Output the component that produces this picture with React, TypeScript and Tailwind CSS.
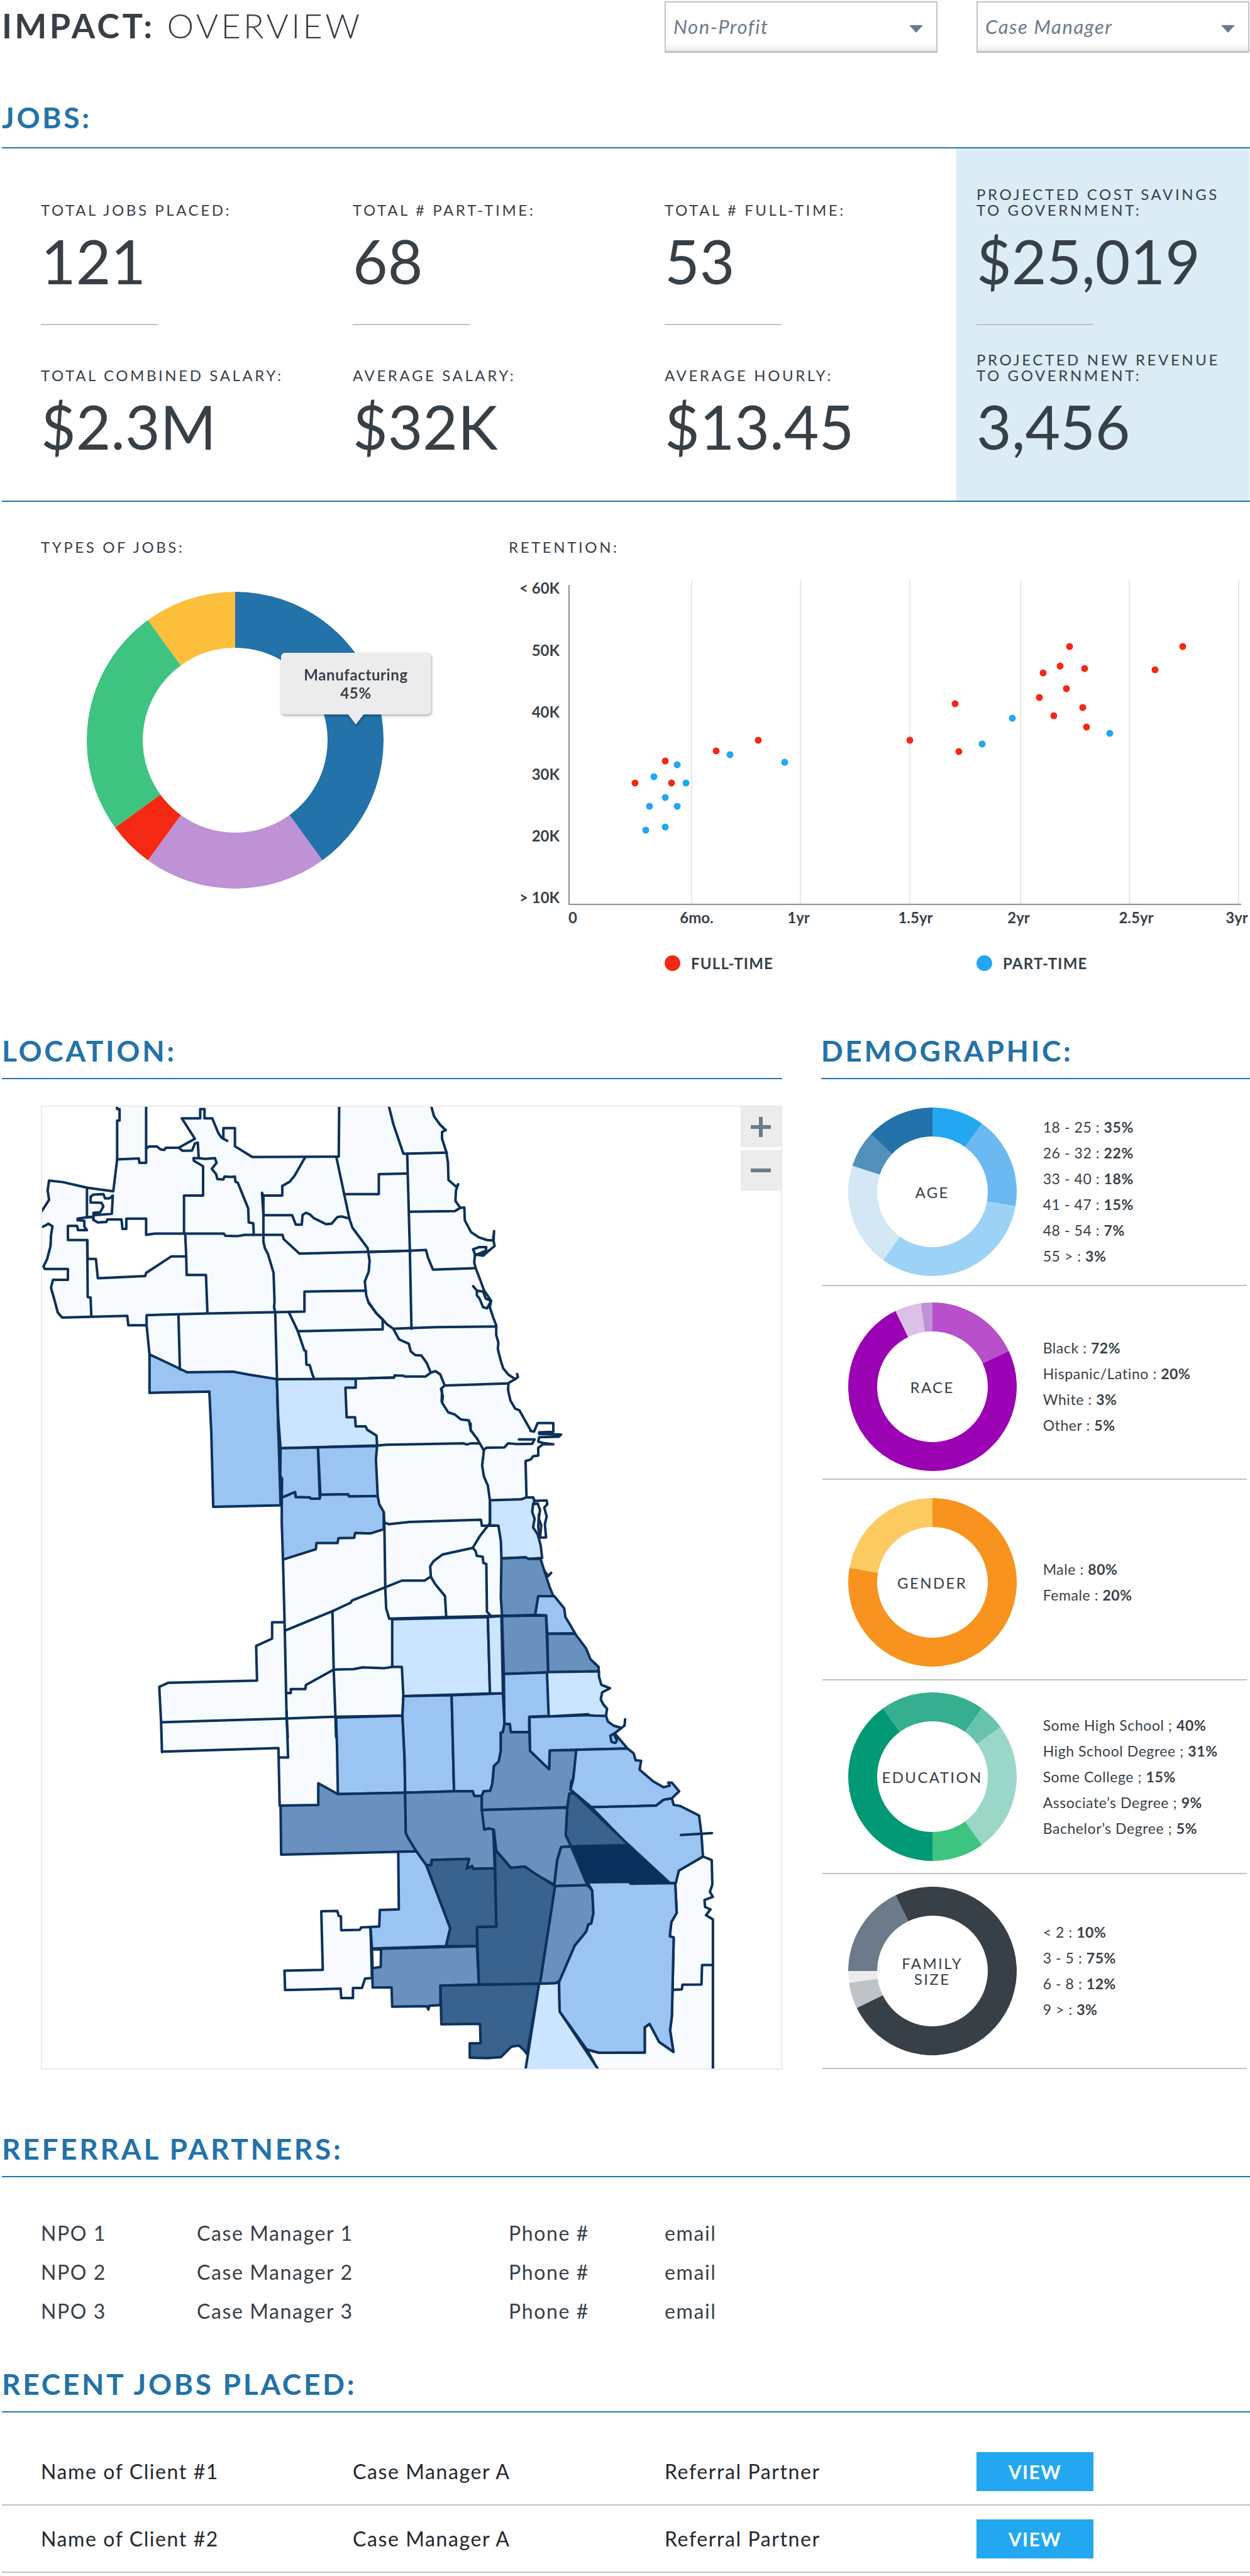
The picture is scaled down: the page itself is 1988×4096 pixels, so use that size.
import React from "react";

type Slice = { from: number; to: number; color: string };

const point = (r: number, deg: number) => {
  const a = ((deg - 90) * Math.PI) / 180;
  return `${(r * Math.cos(a)).toFixed(2)} ${(r * Math.sin(a)).toFixed(2)}`;
};

function slicePath(outer: number, inner: number, from: number, to: number) {
  const large = to - from > 180 ? 1 : 0;
  return `M${point(outer, from)}A${outer} ${outer} 0 ${large} 1 ${point(outer, to)}L${point(inner, to)}A${inner} ${inner} 0 ${large} 0 ${point(inner, from)}Z`;
}

function Donut({ slices, outer, inner, label }: { slices: Slice[]; outer: number; inner: number; label: string }) {
  return (
    <svg
      role="img"
      aria-label={label}
      viewBox={`${-outer} ${-outer} ${outer * 2} ${outer * 2}`}
      className="block h-full w-full"
    >
      {slices.map((s) => (
        <path key={s.from} d={slicePath(outer, inner, s.from, s.to)} fill={s.color} />
      ))}
    </svg>
  );
}

function Heading({ children, className = "pb-[15px]" }: { children: React.ReactNode; className?: string }) {
  return (
    <h2
      className={`border-b-2 border-[#2372a9] text-[46px] leading-[56px] font-bold tracking-[0.08em] text-[#2372a9] ${className}`}
    >
      {children}
    </h2>
  );
}

function Filter({ id, label }: { id: string; label: string }) {
  return (
    <div className="relative">
      <select
        id={id}
        aria-label={label}
        className="h-[82px] w-full appearance-none rounded-none border-2 border-b-3 border-[#bdc3c7] bg-linear-to-t from-[#ebebeb] to-white to-[12px] px-3 text-[31px] tracking-wider text-[#6c7a89] italic"
      >
        <option>{label}</option>
      </select>
      <svg viewBox="0 0 22 12" className="pointer-events-none absolute top-[38px] right-[23px] h-3 w-[22px]">
        <path d="M0 0H22L11 12Z" fill="#6c7a89" />
      </svg>
    </div>
  );
}

function Stat({ label, value }: { label: string[]; value: string }) {
  return (
    <div>
      <div className="flex h-[50px] flex-col justify-end text-[24px] leading-[25px] tracking-[0.15em] whitespace-nowrap">
        {label.map((l) => (
          <div key={l}>{l}</div>
        ))}
      </div>
      <div className="mt-[21px] text-[96px] leading-none">{value}</div>
    </div>
  );
}

const stats = [
  [
    { label: ["TOTAL JOBS PLACED:"], value: "121" },
    { label: ["TOTAL COMBINED SALARY:"], value: "$2.3M" },
  ],
  [
    { label: ["TOTAL # PART-TIME:"], value: "68" },
    { label: ["AVERAGE SALARY:"], value: "$32K" },
  ],
  [
    { label: ["TOTAL # FULL-TIME:"], value: "53" },
    { label: ["AVERAGE HOURLY:"], value: "$13.45" },
  ],
  [
    { label: ["PROJECTED COST SAVINGS", "TO GOVERNMENT:"], value: "$25,019" },
    { label: ["PROJECTED NEW REVENUE", "TO GOVERNMENT:"], value: "3,456" },
  ],
];

const jobTypes: Slice[] = [
  { from: 0, to: 144, color: "#2372a9" },
  { from: 144, to: 216, color: "#bf91d5" },
  { from: 216, to: 234, color: "#f42813" },
  { from: 234, to: 324, color: "#3fc380" },
  { from: 324, to: 360, color: "#fbbf3b" },
];

// Scatter samples, in plot units measured from the top left corner of the chart.
const fullTime = [
  [1193, 308], [1428, 308], [1174, 362], [1139, 381], [1225, 370], [1371, 373], [1187, 425],
  [1131, 450], [955, 468], [1220, 479], [1161, 501], [1228, 534], [861, 571], [964, 603],
  [547, 571], [459, 600], [354, 629], [291, 691], [367, 691],
];
const partTime = [
  [1074, 508], [1277, 552], [1012, 581], [488, 611], [602, 633], [378, 640], [330, 673],
  [397, 691], [354, 732], [321, 757], [378, 757], [354, 815], [313, 823],
];
const plotX = (u: number) => Math.round(u * 0.766 - 22);
const plotY = (v: number) => Math.round(v * 0.566 - 58);

const yTicks: [string, number][] = [
  ["< 60K", 32], ["50K", 131], ["40K", 229], ["30K", 328], ["20K", 426], ["> 10K", 524],
];
const xTicks: [string, number][] = [
  ["0", 102], ["6mo.", 299], ["1yr", 461], ["1.5yr", 647], ["2yr", 811], ["2.5yr", 998], ["3yr", 1158],
];

function Retention() {
  return (
    <svg role="img" aria-label="Retention" viewBox="0 0 1178 568" className="mt-[30px] block w-full">
      {[291, 464, 638, 814, 987, 1161].map((x) => (
        <path key={x} d={`M${x} 11V526`} stroke="#e6e7e8" strokeWidth="2" />
      ))}
      <path d="M96 18V526H1165" fill="none" stroke="#8b8f91" strokeWidth="2" />
      <g fill="#373f47" fontSize="24" fontWeight="700">
        {yTicks.map(([t, y]) => (
          <text key={t} x="81" y={y} textAnchor="end">
            {t}
          </text>
        ))}
        {xTicks.map(([t, x]) => (
          <text key={t} x={x} y="556" textAnchor="middle">
            {t}
          </text>
        ))}
      </g>
      {fullTime.map(([x, y]) => (
        <circle key={`${x}-${y}`} cx={plotX(x)} cy={plotY(y)} r="5.5" fill="#f42813" />
      ))}
      {partTime.map(([x, y]) => (
        <circle key={`${x}-${y}`} cx={plotX(x)} cy={plotY(y)} r="5.5" fill="#22a7f0" />
      ))}
    </svg>
  );
}

const L = "#f7fbff";
const C1 = "#cbe4ff";
const C2 = "#9ac4f1";
const C3 = "#6991c0";
const C4 = "#39638f";
const C5 = "#08305c";

type Tile = { transform: string; land?: string[]; areas?: [string, string][]; lines?: string[] };

// The ward map, drawn as five sheets that each keep their own units.
const tiles: Tile[] = [
  {
    transform: "translate(60 2080) scale(.45918 .40816)",
    land: [
      "348,40 350,62 360,62 360,115 350,115 350,296 334,445 225,428 125,402 68,395 62,440 68,485 38,535 38,612 65,596 82,608 76,650 74,700 60,760 45,795 50,807 146,807 146,857 84,857 76,895 90,950 104,1010 122,1033 392,1025 396,1069 472,1069 484,1384 732,1378 740,1568 1568,1568 1568,40 1270,40 1268,283 910,285 838,235 838,150 790,150 790,200 806,210 782,195 770,175 744,105 712,105 712,62 694,62 694,105 618,105 672,200 605,242 552,242 545,252 530,250 515,236 482,236 470,245 470,40",
    ],
    areas: [
      ["#ffffff", "146,606 184,606 188,626 225,626 214,610 214,582 186,580 186,572 225,566 248,564 252,578 270,590 305,588 310,576 368,576 372,620 388,620 388,572 470,572 470,648 505,642 632,642 636,748 575,748 470,825 466,840 270,850 262,760 228,760 226,672 146,672"],
      ["#ffffff", "240,470 252,460 293,458 300,478 318,478 332,465 328,550 252,556 252,545 280,542 293,515 285,498 240,497"],
      [C2, "484,1205 560,1245 640,1288 830,1285 900,1300 1012,1320 1018,1568 1027,1908 748,1915 740,1568 732,1378 484,1384"],
    ],
    lines: [
      "348,40 350,62 360,62 360,115 350,115 350,296 334,445 225,428 125,402 68,395 62,440 68,485 38,537",
      "36,612 50,606 65,596 82,608 76,650 74,700 60,760 45,795 50,807 146,807 146,857 84,857 76,895 90,950 104,1010 122,1033 392,1025 396,1069 472,1069",
      "350,296 440,292 442,312 470,312 470,40",
      "470,245 482,236 515,236 530,250 545,252 552,242 605,242 672,200 618,105 694,105 694,62 712,62 712,105 744,105 770,175 782,195 806,210 790,200 790,150 838,150 838,235 910,285 1268,283 1270,40",
      "225,428 225,566 248,564",
      "252,556 252,578",
      "605,242 620,256 660,255 672,222 684,218 688,290 666,290 668,303 706,328 706,465 627,465 627,642",
      "688,290 715,294 755,290 762,312 742,340 760,365 765,388 790,390 795,376 825,378 838,376 840,400 850,405 893,525 895,590 914,594 916,648",
      "632,642 792,642 798,652 845,654 880,648 1035,648 1040,668 1105,735 1568,722",
      "1128,288 1085,372 1065,400 1034,420 1034,465 956,465 950,452 956,556 1075,556 1090,600 1115,600 1118,555 1132,545 1148,552 1165,570 1215,598 1238,596 1262,565 1280,562 1312,572",
      "956,465 956,680 962,710 975,738 998,825 1002,960 1000,985 1005,1010 1018,1568",
      "1258,285 1290,455 1312,572 1325,615 1388,710 1396,770 1392,820 1376,865 1382,930 1392,965 1425,1015 1450,1042",
      "1290,458 1434,458 1434,365 1552,362",
      "226,672 228,938 240,940 243,1028",
      "636,748 638,835 718,835 724,1012",
      "484,1205 472,1069 472,1022 724,1014 1000,1008 1126,1005 1126,912 1380,908",
      "604,1022 610,1275",
      "1012,1320 1030,1322 1330,1318 1498,1312",
      "1062,1010 1098,1095 1125,1185 1132,1190 1134,1252 1148,1255 1158,1295 1165,1315",
      "1098,1097 1450,1088 1450,1042",
    ],
  },
  {
    transform: "translate(700 2080) scale(.5102 .40816)",
    land: [
      "-40,40 232,40 242,95 265,135 286,160 272,168 272,200 288,262 294,310 296,392 326,425 324,440 322,490 340,522 355,520 357,580 380,635 410,660 462,674 468,700 450,718 425,745 395,735 392,775 398,805 415,860 428,905 455,955 450,985 470,1050 474,1075 474,1115 482,1150 480,1180 490,1230 500,1270 520,1300 545,1320 520,1338 518,1370 527,1420 545,1458 560,1465 604,1562 604,1600 -40,1600",
    ],
    lines: [
      "230,40 242,95 265,135 286,160 272,168 272,200 288,262 294,310 296,392 326,425 332,412 324,440 322,490 340,522 355,520 357,580 380,635 410,660 440,672 462,674 466,630 464,674 468,700 450,718 425,745 395,738 392,775 398,805 415,860 428,905 455,955 450,985 462,1030 474,1070 474,1115 482,1150 480,1180 490,1230 500,1270 520,1300 545,1320 555,1310 552,1296",
      "545,1320 520,1338 518,1370 527,1420 545,1458 560,1465 604,1562",
      "395,738 388,715 410,705 437,705 435,722 410,735 398,742 425,738 450,718",
      "388,887 402,908 425,912 435,945 455,955 440,990 425,985 412,945 402,930 402,908",
      "72,40 90,130 128,270 290,265",
      "142,270 148,540 152,722 158,1085",
      "148,540 320,537 340,522",
      "0,728 152,722 212,718 220,755 238,810 395,803",
      "90,1085 250,1078 474,1075",
      "0,965 25,1010 50,1042 68,1066 90,1085 112,1135 148,1155 155,1190 172,1208 195,1210 215,1245 230,1290 248,1283 265,1298 282,1350 268,1365 275,1400 272,1430 295,1475 320,1485 342,1508 372,1512 380,1562",
      "0,1315 92,1313 95,1303 128,1304 132,1308 210,1308 230,1290",
      "282,1350 515,1340",
    ],
  },
  {
    transform: "translate(240 2640) scale(.57398 .42092)",
    land: [
      "500,240 828,240 828,180 1338,187 1348,187 1350,222 1342,242 1362,260 1362,295 1345,298 1338,312 1320,320 1323,480 1345,484 1375,758 1300,1568 115,1568 106,1340 135,1322 430,1312 427,1155 480,1122 480,1048 520,1048",
    ],
    areas: [
      [C1, "496,-50 757,-52 757,-12 723,-12 727,122 755,122 757,163 790,163 795,178 826,205 828,250 508,262 500,120"],
      [C2, "508,262 632,258 638,490 608,490 605,484 558,483 556,460 512,485 513,400 507,385"],
      [C2, "632,258 828,252 824,310 830,478 735,480 732,470 640,472"],
      [C2, "512,485 556,460 558,483 605,484 608,490 638,490 640,472 732,470 735,480 830,478 835,515 850,550 850,628 805,647 755,645 752,667 700,668 697,690 627,690 625,718 516,765 512,600"],
      [C1, "1202,497 1305,493 1323,484 1345,484 1350,500 1345,515 1342,550 1350,580 1345,620 1360,650 1370,700 1375,758 1330,762 1320,755 1240,760 1238,680 1230,612 1202,610"],
      [C1, "878,1035 1195,1025 1198,1170 1202,1370 915,1382 910,1250 878,1250"],
      [C1, "1195,1025 1240,1020 1245,1370 1202,1370 1198,1170"],
      [C3, "1240,760 1320,755 1330,762 1370,762 1382,815 1400,890 1412,930 1362,930 1352,1015 1242,1020 1238,935"],
      [C2, "1362,930 1415,930 1448,985 1452,1025 1470,1065 1484,1098 1392,1100 1388,1018 1352,1015"],
      [C3, "1242,1020 1388,1018 1395,1275 1248,1282"],
      [C3, "1392,1100 1484,1100 1520,1165 1535,1215 1562,1250 1562,1270 1395,1275"],
      [C2, "1248,1282 1395,1275 1398,1472 1332,1475 1332,1545 1270,1545 1268,1508 1250,1508"],
    ],
    lines: [
      "1336,183 1348,187 1360,148 1412,148 1412,188 1365,190 1365,197 1438,200 1430,210 1365,212 1362,232 1378,238 1412,244 1378,244 1362,260 1362,295 1345,298 1338,312 1320,320 1323,480",
      "1298,222 1350,222 1342,242 1290,243 1262,240 1250,258 1190,260 1180,270",
      "1345,484 1350,500 1390,498 1392,515 1382,530 1390,570 1384,605 1388,665 1368,665 1372,610 1364,580 1368,540 1360,512 1345,515",
      "1364,560 1362,620 1368,665",
      "1382,815 1395,840 1405,825",
      "1138,150 1138,180 1160,220 1168,240 1182,272 1176,340 1182,390 1195,430 1202,500 1202,600 1168,660 1145,712",
      "1043,0 1042,50",
      "828,250 858,246 1115,240 1125,245 1138,240 1168,240",
      "516,765 522,1085 528,1480 532,1568",
      "850,550 852,600 855,890 858,985 868,1032",
      "850,598 868,605 935,595 1172,585 1175,612 1230,612",
      "525,1085 680,998 740,960 745,950 855,890 910,860 985,860 1006,842 1004,795 1015,772 1045,742 1145,712 1155,728 1158,748 1178,752 1180,780 1190,785 1192,1000 1205,1020",
      "1006,842 1020,875 1053,930 1057,1025",
      "868,1032 1057,1025 1205,1020 1388,1018",
      "680,998 684,1260 690,1480 692,1568",
      "520,1048 480,1048 480,1122 427,1155 430,1312 135,1322 106,1340 112,1500 115,1635",
      "528,1368 542,1368 542,1350 590,1350 592,1332 684,1262 750,1260 780,1252 850,1256 878,1250",
      "112,1500 528,1483 690,1475 915,1470",
      "915,1382 912,1470",
    ],
  },
  {
    transform: "translate(500 3250) scale(.57398 .44643)",
    land: [
      "-336,-60 -338,173 0,160 48,158 52,403 180,403 245,354 462,348 462,-20 -100,-60",
    ],
    areas: [
      [L, "190,853 243,852 248,873 255,875 256,934 318,932 322,922 353,920 358,1138 335,1140 325,1180 295,1180 295,1223 256,1223 254,1183 70,1189 68,1106 195,1103"],
      [L, "1455,620 1484,635 1486,740 1478,770 1488,792 1460,805 1462,835 1480,845 1465,870 1488,888 1488,1540 1112,1540 1070,1442 1110,1456 1262,1455 1262,1348 1278,1333 1310,1410 1357,1452 1346,1360 1352,1300 1354,1188 1358,965 1345,960 1350,900 1368,860 1363,733 1375,680"],
      [C2, "239,28 459,20 466,200 468,348 245,354 242,150"],
      [C2, "462,-63 622,-67 630,342 468,348 466,200 459,20"],
      [C2, "622,-67 792,-75 797,55 792,90 785,92 785,170 778,215 762,235 757,310 750,340 728,342 722,362 697,362 692,342 630,342"],
      [C3, "55,403 180,400 180,308 245,354 468,348 470,520 480,545 505,598 445,600 57,612"],
      [C3, "468,348 630,342 692,342 697,362 722,362 722,420 728,425 730,505 745,500 760,503 765,670 692,672 690,660 672,672 680,630 556,635 555,657 538,657 505,598 480,545 470,520"],
      [C3, "797,55 815,57 818,90 880,90 882,170 945,248 947,168 1035,165 1035,240 1028,255 1025,290 1018,300 1016,335 1028,350 1012,352 1010,410 722,422 722,362 728,342 750,340 757,310 762,235 778,215 785,170 785,92 792,90"],
      [C2, "880,26 1075,18 1133,18 1140,45 1158,62 1185,72 1162,95 1205,160 947,168 945,248 882,170"],
      [C2, "1035,165 1205,160 1225,180 1232,210 1250,212 1245,250 1290,300 1325,325 1345,318 1340,305 1352,305 1376,342 1352,372 1325,378 1300,403 1085,410 1016,335 1025,290 1028,255"],
      [C2, "1085,410 1300,403 1325,378 1352,372 1358,400 1380,405 1442,445 1450,525 1455,620 1375,680 1365,733 1345,733 1210,575"],
      [C4, "1012,352 1028,350 1210,572 1018,577 1000,530 1005,412"],
      [C5, "1018,577 1210,572 1345,733 1215,736 1212,726 1072,730"],
      [C3, "722,422 1005,412 1000,530 1018,577 985,580 972,635 962,740 920,710 895,690 865,663 818,668 770,595 762,505 745,500 730,505"],
      [C3, "985,580 1018,577 1072,742 962,746 972,635"],
      [C4, "765,590 818,668 865,663 895,690 920,710 965,746 915,1162 712,1165 706,920 770,918"],
      [C3, "965,746 1072,742 1088,765 1092,860 1085,905 1075,910 1068,940 1030,1000 980,1150 965,1160 915,1162"],
      [C4, "556,635 680,630 672,672 690,660 692,672 765,670 770,918 706,920 706,1002 603,1002 617,925 538,657 555,657"],
      [C2, "445,600 505,598 538,657 617,925 603,1002 358,1012 353,920 382,918 384,848 447,845"],
      [C3, "358,1014 706,1002 712,1165 585,1170 585,1253 548,1256 545,1272 540,1258 425,1260 423,1178 360,1178"],
      ["#ffffff", "358,1016 388,1016 387,1090 360,1096"],
      [C4, "585,1170 912,1162 872,1462 862,1445 845,1425 820,1430 785,1475 740,1479 682,1477 682,1416 718,1416 716,1333 588,1335"],
      [C1, "912,1162 965,1160 978,1155 980,1280 1112,1535 866,1535"],
      [C2, "1072,730 1212,728 1215,736 1363,733 1368,860 1350,900 1345,960 1358,965 1354,1188 1352,1300 1346,1360 1357,1452 1310,1410 1278,1333 1262,1348 1262,1455 1110,1456 1070,1442 980,1280 978,1155 1030,1000 1068,940 1075,910 1085,905 1092,860 1088,765"],
    ],
    lines: [
      "-338,173 0,160 48,158 52,403",
      "75,0 80,198 50,198",
      "1382,528 1485,520",
      "1185,72 1195,62 1197,35",
      "1162,95 1148,105 1152,132 1165,136 1170,125 1160,100",
      "1355,1188 1385,1186 1387,1166 1450,1165 1452,1082 1488,1082",
    ],
  },
  {
    transform: "translate(900 2900) scale(.33333 .66964)",
    areas: [
      [C1, "415,412 712,410 712,425 725,448 750,453 775,458 730,470 722,490 738,505 758,516 752,537 690,536 660,535 650,532 425,538"],
    ],
  },
];

function WardMap() {
  return (
    <svg role="img" aria-label="Clients by ward" viewBox="78 2101 1405 1829" className="block w-full">
      {tiles.map((t) => (
        <g key={t.transform} transform={t.transform}>
          {t.land?.map((p) => <polygon key={p} points={p} fill={L} />)}
        </g>
      ))}
      {tiles.map((t) => (
        <g
          key={t.transform}
          transform={t.transform}
          stroke="#0d315b"
          strokeWidth="4"
          strokeLinejoin="round"
          strokeLinecap="round"
        >
          {t.areas?.map(([fill, p]) => (
            <polygon key={p} points={p} fill={fill} vectorEffect="non-scaling-stroke" />
          ))}
          {t.lines?.map((p) => (
            <polyline key={p} points={p} fill="none" vectorEffect="non-scaling-stroke" />
          ))}
        </g>
      ))}
    </svg>
  );
}

type Group = { title: string[]; sep: string; pad: string; slices: Slice[]; rows: [string, string][] };

const demographics: Group[] = [
  {
    title: ["AGE"],
    sep: ":",
    pad: "pt-[45px] pb-[14px]",
    slices: [
      { from: 0, to: 36, color: "#22a7f0" },
      { from: 36, to: 100, color: "#6bb9f0" },
      { from: 100, to: 216, color: "#9dd2f7" },
      { from: 216, to: 288, color: "#d3e7f5" },
      { from: 288, to: 313, color: "#5390bb" },
      { from: 313, to: 360, color: "#2372a9" },
    ],
    rows: [["18 - 25", "35%"], ["26 - 32", "22%"], ["33 - 40", "18%"], ["41 - 47", "15%"], ["48 - 54", "7%"], ["55 >", "3%"]],
  },
  {
    title: ["RACE"],
    sep: ":",
    pad: "pt-[26px] pb-3",
    slices: [
      { from: 0, to: 65, color: "#b750ca" },
      { from: 65, to: 334, color: "#9a02b3" },
      { from: 334, to: 352, color: "#dcc0e7" },
      { from: 352, to: 360, color: "#bf91d5" },
    ],
    rows: [["Black", "72%"], ["Hispanic/Latino", "20%"], ["White", "3%"], ["Other", "5%"]],
  },
  {
    title: ["GENDER"],
    sep: ":",
    pad: "pt-[29px] pb-5",
    slices: [
      { from: 0, to: 280, color: "#f7931e" },
      { from: 280, to: 360, color: "#fbcb61" },
    ],
    rows: [["Male", "80%"], ["Female", "20%"]],
  },
  {
    title: ["EDUCATION"],
    sep: ";",
    pad: "py-[19px]",
    slices: [
      { from: 180, to: 324, color: "#019875" },
      { from: 324, to: 396, color: "#36ae90" },
      { from: 36, to: 54, color: "#68c3ae" },
      { from: 54, to: 144, color: "#9bd7c8" },
      { from: 144, to: 180, color: "#3fc380" },
    ],
    rows: [["Some High School", "40%"], ["High School Degree", "31%"], ["Some College", "15%"], ["Associate’s Degree", "9%"], ["Bachelor’s Degree", "5%"]],
  },
  {
    title: ["FAMILY", "SIZE"],
    sep: ":",
    pad: "py-5",
    slices: [
      { from: 334, to: 604, color: "#373f47" },
      { from: 244, to: 262, color: "#bdc3c7" },
      { from: 262, to: 270, color: "#ececec" },
      { from: 270, to: 334, color: "#6c7a89" },
    ],
    rows: [["< 2", "10%"], ["3 - 5", "75%"], ["6 - 8", "12%"], ["9 >", "3%"]],
  },
];

export default function App() {
  return (
    <main className="w-full bg-white [font-family:Lato,'Open_Sans',sans-serif] text-[#373f47]">
      <header className="grid grid-cols-4 gap-x-[62px] pt-0.5 pr-px pl-[65px]">
        <h1 className="col-span-2 -ml-[62px] pt-[5px] text-[54px] leading-[68px] font-light tracking-[0.08em]">
          <strong className="font-bold">IMPACT:</strong> OVERVIEW
        </h1>
        <Filter id="non-profit" label="Non-Profit" />
        <Filter id="case-manager" label="Case Manager" />
      </header>

      <section className="mt-[75px] pl-[3px]">
        <Heading className="pb-[19px]">JOBS:</Heading>
        <div className="grid grid-cols-4 gap-x-[62px] border-b-2 border-[#2372a9] pr-px pl-[62px]">
          {stats.map((pair, i) => (
            <div
              key={pair[0].value}
              className={i === 3 ? "-ml-8 bg-[#dbecf6] pt-[60px] pb-[70px] pl-8" : "pt-[60px] pb-[70px]"}
            >
              <Stat {...pair[0]} />
              <hr className="mt-[52px] mb-[42px] w-[186px] border-t-2 border-[#bdc3c7]" />
              <Stat {...pair[1]} />
            </div>
          ))}
        </div>
      </section>

      <section className="grid grid-cols-8 gap-x-[62px] pt-[59px] pr-px pl-[65px]">
        <div className="col-span-3">
          <h3 className="text-[24px] leading-[25px] tracking-[0.15em]">TYPES OF JOBS:</h3>
          <div className="relative mt-[59px] ml-[73px] h-[472px] w-[472px]">
            <Donut slices={jobTypes} outer={236} inner={147} label="Types of jobs" />
            <div
              role="tooltip"
              className="absolute top-[97px] left-[309px] flex h-[98px] w-[238px] flex-col items-center justify-center rounded-md bg-[#ececec] text-2xl leading-[29px] font-bold tracking-wide drop-shadow-[1px_2px_2px_rgba(0,0,0,0.35)]"
            >
              <span>Manufacturing</span>
              <span>45%</span>
              <svg viewBox="0 0 26 17" className="absolute top-[97px] left-[106px] h-[17px] w-[26px]">
                <path d="M0 0H26L13 17Z" fill="#ececec" />
              </svg>
            </div>
          </div>
        </div>
        <div className="col-span-5">
          <h3 className="text-[24px] leading-[25px] tracking-[0.15em]">RETENTION:</h3>
          <Retention />
          <ul className="mt-[39px] grid grid-cols-5 gap-x-[62px] text-[24px] leading-[25px] font-bold tracking-wider">
            <li className="col-span-2 col-start-2 flex items-center gap-[17px]">
              <span className="size-[25px] rounded-full bg-[#f42813]" />
              FULL-TIME
            </li>
            <li className="col-span-2 col-start-4 flex items-center gap-[17px]">
              <span className="size-[25px] rounded-full bg-[#22a7f0]" />
              PART-TIME
            </li>
          </ul>
        </div>
      </section>

      <div className="mt-[99px] grid grid-cols-8 items-start gap-x-[62px] pl-[65px]">
        <section className="col-span-5">
          <div className="-ml-[62px]">
            <Heading>LOCATION:</Heading>
          </div>
          <div className="relative mt-[42px] border-2 border-[#ebebeb]">
            <WardMap />
            <div className="absolute top-0 right-0 flex flex-col gap-[5px]">
              <button type="button" aria-label="Zoom in" className="flex size-[64px] items-center justify-center bg-[#ececec]">
                <svg viewBox="0 0 32 32" className="size-8">
                  <path d="M16 0V32M0 16H32" stroke="#6c7a89" strokeWidth="6" />
                </svg>
              </button>
              <button type="button" aria-label="Zoom out" className="flex size-[64px] items-center justify-center bg-[#ececec]">
                <svg viewBox="0 0 32 32" className="size-8">
                  <path d="M0 16H32" stroke="#6c7a89" strokeWidth="6" />
                </svg>
              </button>
            </div>
          </div>
        </section>

        <section className="col-span-3">
          <Heading>DEMOGRAPHIC:</Heading>
          {demographics.map((g) => (
            <div key={g.title[0]} className={`mr-[5px] ml-0.5 flex items-center border-b-2 border-[#bdc3c7] ${g.pad}`}>
              <div className="relative ml-[41px] size-[268px] shrink-0">
                <Donut slices={g.slices} outer={134} inner={88} label={g.title.join(" ")} />
                <div className="absolute inset-0 flex flex-col items-center justify-center text-[24px] leading-[25px] tracking-widest">
                  {g.title.map((t) => (
                    <span key={t}>{t}</span>
                  ))}
                </div>
              </div>
              <ul className="ml-[42px] text-[23px] leading-[41px] tracking-wide whitespace-nowrap">
                {g.rows.map(([name, share]) => (
                  <li key={name}>
                    {name} {g.sep} <b className="font-bold">{share}</b>
                  </li>
                ))}
              </ul>
            </div>
          ))}
        </section>
      </div>

      <section className="mt-[98px] pl-[3px]">
        <Heading>REFERRAL PARTNERS:</Heading>
        <table className="mt-[58px] block text-[32px] leading-[62px] tracking-wider">
          <tbody className="block">
            {[1, 2, 3].map((n) => (
              <tr key={n} className="grid grid-cols-8 gap-x-[62px] pr-px pl-[62px] whitespace-nowrap">
                <td>NPO {n}</td>
                <td className="col-span-2">Case Manager {n}</td>
                <td>Phone #</td>
                <td>email</td>
              </tr>
            ))}
          </tbody>
        </table>
      </section>

      <section className="mt-[57px] pl-[3px]">
        <Heading>RECENT JOBS PLACED:</Heading>
        <table className="mt-[41px] block text-[32px] leading-[62px] tracking-wider text-[#22282d]">
          <tbody className="block">
            {[1, 2].map((n) => (
              <tr
                key={n}
                className="grid grid-cols-4 gap-x-[62px] border-b-2 border-[#bdc3c7] pt-[22px] pr-px pb-[21px] pl-[62px] whitespace-nowrap"
              >
                <td>Name of Client #{n}</td>
                <td>Case Manager A</td>
                <td>Referral Partner</td>
                <td>
                  <button
                    type="button"
                    className="block h-[62px] w-[186px] bg-[#22a7f0] text-[30px] font-bold tracking-wider text-white"
                  >
                    VIEW
                  </button>
                </td>
              </tr>
            ))}
          </tbody>
        </table>
      </section>
    </main>
  );
}
